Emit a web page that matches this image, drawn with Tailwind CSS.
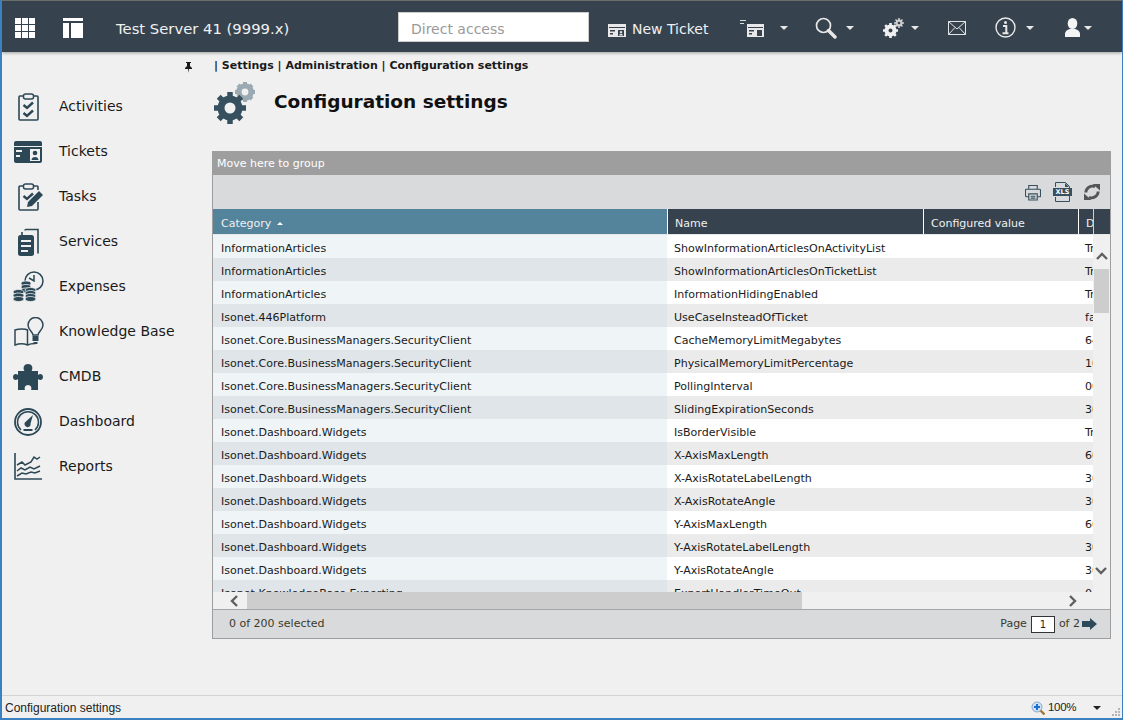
<!DOCTYPE html>
<html lang="en">
<head>
    <meta charset="UTF-8">
    <meta name="viewport" content="width=device-width, initial-scale=1.0">
    <title>Configuration settings</title>
    <script src="https://cdn.jsdelivr.net/npm/@tailwindcss/browser@4"></script>
</head>
<body class="bg-[#f0f0f0] font-['DejaVu_Sans',sans-serif] overflow-hidden">
<div class="w-[1123px] h-[720px] flex flex-col border-l-2 border-r border-b-2 border-t border-l-[#3b80c0] border-r-[#3b80c0] border-b-[#3b80c0] border-t-[#6d6d6d] overflow-hidden">

    <!-- Top bar -->
    <header class="h-[51px] shrink-0 pt-[2px] bg-[#36434f] flex items-center text-white shadow-[0_1px_3px_rgba(0,0,0,0.35)] relative z-10">
        <svg class="ml-[13px] w-[20px] h-[20px]" viewBox="0 0 20 20" fill="#fff"><path d="M0 0h6v6H0zM7 0h6v6H7zM14 0h6v6h-6zM0 7h6v6H0zM7 7h6v6H7zM14 7h6v6h-6zM0 14h6v6H0zM7 14h6v6H7zM14 14h6v6h-6z"/></svg>
        <svg class="ml-[28px] w-[20px] h-[20px]" viewBox="0 0 20 20" fill="#fff"><path d="M0 0h20v3H0zM0 5h6v15H0zM8 5h12v15H8z"/></svg>
        <span class="ml-[33px] w-[282px] pt-[4px] text-[14.8px] text-[#f0f0f0]">Test Server 41 (9999.x)</span>
        <div class="w-[191px] h-[30px] mb-[2px] bg-white border border-[#ccc] flex items-center pl-[12px] pt-[6px] text-[14px] text-[#9a9a9a]">Direct access</div>
        <svg class="ml-[19px] w-[18px] h-[13px] mt-[6px]" viewBox="0 0 18 13"><path fill="#e8e8e8" d="M0 0h18v13H0z"/><path fill="#36434f" d="M1 3h16v1H1zM2 6h5v1.500H2zM2 9h3v1.500H2zM10 6h6v6h-6z"/><path fill="#e8e8e8" d="M13 7a1.200 1.200 0 1 1-.01 0zM11 11.500c0-2 4-2 4 0z"/></svg>
        <span class="ml-[6px] w-[108px] pt-[4px] text-[14px] text-[#f0f0f0]">New Ticket</span>
        <svg class="w-[24px] h-[18px]" viewBox="0 0 24 18"><path fill="none" stroke="#ddd" d="M0 1.500h6M0 4.500h4"/><path fill="#e8e8e8" d="M7 5h17v13H7z"/><path fill="#36434f" d="M8 8h15v1H8zM9 11h5v1.500H9zM9 14h3v1.500H9zM17 11h5v6h-5z"/></svg>
        <svg class="ml-[16px] w-[8px] h-[4px]" viewBox="0 0 8 4" fill="#e8e8e8"><path d="M0 0h8L4 4z"/></svg>
        <svg class="ml-[27px] w-[22px] h-[22px]" viewBox="0 0 22 22" fill="none" stroke="#e8e8e8"><circle cx="8.500" cy="8.500" r="7" stroke-width="1.700"/><path d="M13.500 13.500l6.500 6.500" stroke-width="3.400" stroke-linecap="round"/></svg>
        <svg class="ml-[9px] w-[8px] h-[4px]" viewBox="0 0 8 4" fill="#e8e8e8"><path d="M0 0h8L4 4z"/></svg>
        <svg class="ml-[29px] w-[21px] h-[20px]" viewBox="0 0 21 20">
            <circle cx="7.500" cy="12.500" r="4.500" fill="none" stroke="#f0f0f0" stroke-width="3"/>
            <path stroke="#f0f0f0" stroke-width="2.600" d="M7.500 5v15M0 12.500h15M2.200 7.200l10.600 10.600M12.800 7.200L2.200 17.800"/>
            <circle cx="7.500" cy="12.500" r="2" fill="#36434f"/>
            <circle cx="16" cy="5" r="2.600" fill="none" stroke="#cfcfcf" stroke-width="1.800"/>
            <path stroke="#cfcfcf" stroke-width="1.500" d="M16 0v10M11 5h10M12.500 1.500l7 7M19.500 1.500l-7 7"/>
            <circle cx="16" cy="5" r="1.300" fill="#36434f"/>
        </svg>
        <svg class="ml-[7px] w-[8px] h-[4px]" viewBox="0 0 8 4" fill="#e8e8e8"><path d="M0 0h8L4 4z"/></svg>
        <svg class="ml-[29px] w-[18px] h-[14px]" viewBox="0 0 18 14" fill="none" stroke="#e4e4e4"><path d="M.5.500h17v13H.5zM.5.500L9 8l8.500-7.500M.5 13.500L7 6.500M17.500 13.500L11 6.500"/></svg>
        <svg class="ml-[29px] w-[21px] h-[21px]" viewBox="0 0 21 21" fill="none" stroke="#e8e8e8"><circle cx="10.500" cy="10.500" r="9.500" stroke-width="1.400"/><circle cx="10.500" cy="5.500" r="1.500" fill="#e8e8e8" stroke="none"/><path stroke-width="2" d="M8 9h3.300v7M7.500 16.200h6"/></svg>
        <svg class="ml-[10px] w-[8px] h-[4px]" viewBox="0 0 8 4" fill="#e8e8e8"><path d="M0 0h8L4 4z"/></svg>
        <svg class="ml-[31px] w-[15px] h-[19px]" viewBox="0 0 15 19" fill="#f5f5f5"><ellipse cx="7.500" cy="5.500" rx="4.800" ry="5.500"/><path d="M0 19v-3c0-3 3-4.500 5-5h5c2 .5 5 2 5 5v3z"/></svg>
        <svg class="ml-[4px] w-[8px] h-[4px]" viewBox="0 0 8 4" fill="#e8e8e8"><path d="M0 0h8L4 4z"/></svg>
    </header>

    <div class="flex flex-1 min-h-0">
        <!-- Sidebar -->
        <aside class="w-[210px] shrink-0 relative">
            <svg class="absolute left-[182px] top-[10px] w-[9px] h-[11px]" viewBox="0 0 9 11" fill="#1c1c1c"><path d="M2 0h5v1H6v3l2 2v1H5l-.500 4L4 7H1V6l2-2V1H2z"/></svg>
            <nav id="sideNav" class="pt-[32px] flex flex-col"></nav>
        </aside>

        <!-- Content -->
        <main class="flex-1 min-w-0 pr-[11px]">
            <p class="h-[25px] pt-[6px] text-[11px] font-bold text-[#1a1a1a] pl-[2px] whitespace-pre">| Settings | Administration | Configuration settings</p>
            <div class="h-[74px] flex items-start pl-[2px]">
                <svg class="mt-[4px] w-[43px] h-[44px]" viewBox="0 0 43 44">
                    <circle cx="31" cy="11" r="6.800" fill="none" stroke="#9aa9b2" stroke-width="4"/>
                    <path stroke="#9aa9b2" stroke-width="4" d="M31 1v20M21 11h20M24 4l14 14M38 4L24 18"/>
                    <circle cx="31" cy="11" r="3.400" fill="#f0f0f0"/>
                    <circle cx="16" cy="27" r="9.500" fill="none" stroke="#36505f" stroke-width="6"/>
                    <path stroke="#36505f" stroke-width="5.500" d="M16 11v32M0 27h32M4.700 15.700l22.600 22.600M27.300 15.700L4.700 38.300"/>
                    <circle cx="16" cy="27" r="5.500" fill="#f0f0f0"/>
                </svg>
                <h1 class="ml-[17px] mt-[7px] text-[18.5px] leading-[36px] font-bold text-[#111]">Configuration settings</h1>
            </div>

            <!-- Grid panel -->
            <section class="w-[899px] h-[488px] border-x border-b border-[#9e9e9e] flex flex-col">
                <div class="h-[24px] shrink-0 -mx-px bg-[#9e9e9e] text-white text-[11px] leading-[25px] pl-[5px]">Move here to group</div>
                <div class="h-[34px] shrink-0 bg-[#d9dadc] flex items-center justify-end pr-[10px] gap-[12px]">
                    <svg class="w-[16px] h-[17px]" viewBox="0 0 17 17" fill="none" stroke="#36505f" stroke-width="1.200"><path d="M4 5V1h9v4M3.500 13H1.500a1 1 0 0 1-1-1V6a1 1 0 0 1 1-1h14a1 1 0 0 1 1 1v6a1 1 0 0 1-1 1h-2M4 10h9v6.500H4zM6 12.500h5M6 14.500h5"/></svg>
                    <svg class="w-[19px] h-[20px]" viewBox="0 0 19 20"><path fill="none" stroke="#36505f" d="M2.500 5V.5h10l4 4V19.500h-14V15"/><path fill="#36505f" d="M12 1v4h4zM0 6h19v8H0z"/><text x="9.500" y="12.300" text-anchor="middle" font-size="6.500" font-weight="700" fill="#fff" font-family="DejaVu Sans">XLS</text></svg>
                    <svg class="w-[16px] h-[16px]" viewBox="0 0 16 16" fill="none" stroke="#555" stroke-width="2.800"><path d="M1.800 8.500A6.500 6.500 0 0 1 11 2.800M14.200 7.500A6.500 6.500 0 0 1 5 13.200"/><path fill="#555" stroke="none" d="M8.500 0L16 0v6.500zM7.500 16L0 16V9.500z"/></svg>
                </div>
                <div class="h-[25px] shrink-0 flex text-[11px] text-[#f0f0f0] leading-[30px] bg-[#36434f]">
                    <div class="w-[455px] bg-[#54849c] pl-[8px] border-r border-[#fff]">Category <span class="inline-block align-middle ml-[2px] mb-[1px] w-0 h-0 border-x-[3px] border-x-transparent border-b-[3px] border-b-white"></span></div>
                    <div class="w-[256px] pl-[7px] border-r border-[#fff]">Name</div>
                    <div class="w-[155px] pl-[7px] border-r border-[#fff]">Configured value</div>
                    <div class="w-[15px] pl-[7px] overflow-hidden border-r border-[#d0d0d0]">Default</div>
                </div>
                <div class="h-px shrink-0 bg-[#e8e8e8]"></div>
                <div class="h-[357px] shrink-0 flex">
                    <div id="rows" class="w-[880px] overflow-hidden text-[11.05px] text-[#1a1a1a]"></div>
                    <div class="w-[17px] bg-[#f0f0f0] flex flex-col items-center pt-[17px] relative">
                        <svg class="w-[12px] h-[8px]" viewBox="0 0 12 8" fill="none" stroke="#606060" stroke-width="2.400"><path d="M1 7l5-5 5 5"/></svg>
                        <div class="mt-[9px] w-[15px] h-[44px] bg-[#cdcdcd]"></div>
                        <svg class="absolute left-[2px] top-[332px] w-[12px] h-[8px]" viewBox="0 0 12 8" fill="none" stroke="#606060" stroke-width="2.400"><path d="M1 1l5 5 5-5"/></svg>
                    </div>
                </div>
                <div class="h-[17px] shrink-0 bg-[#f0f0f0] flex items-center pl-[17px] pr-[33px] border-b border-[#a5a5a5] box-content">
                    <svg class="w-[8px] h-[12px]" viewBox="0 0 8 12" fill="none" stroke="#606060" stroke-width="2.400"><path d="M7 1L2 6l5 5"/></svg>
                    <div class="ml-[9px] w-[555px] h-[17px] bg-[#cdcdcd]"></div>
                    <svg class="ml-auto w-[8px] h-[12px]" viewBox="0 0 8 12" fill="none" stroke="#606060" stroke-width="2.400"><path d="M1 1l5 5-5 5"/></svg>
                </div>
                <div class="flex-1 bg-[#d9dadc] flex items-center justify-between pl-[16px] pr-[13px] text-[11px] text-[#3a3a2a]">
                    <span>0 of 200 selected</span>
                    <div class="flex items-center">
                        <span>Page</span>
                        <span class="ml-[4px] w-[24px] h-[17px] bg-white border border-[#333] text-[10px] text-[#222] text-center leading-[16px]">1</span>
                        <span class="ml-[4px]">of 2</span>
                        <svg class="ml-[2px] w-[15px] h-[12px]" viewBox="0 0 15 12" fill="#2e4a58"><path d="M0 3h8V0l7 6-7 6V9H0z"/></svg>
                    </div>
                </div>
            </section>
        </main>
    </div>

    <!-- Status bar -->
    <footer class="h-[23px] shrink-0 bg-[#f0f0f0] border-t border-[#d4d4d4] flex items-center pt-[2px] text-[#222] pl-[3px] relative">
        <span class="font-['Liberation_Sans',sans-serif] text-[12px]">Configuration settings</span>
        <svg class="ml-auto w-[14px] h-[14px]" viewBox="0 0 14 14"><circle cx="6" cy="6" r="5" fill="#cfe2f5" stroke="#8aa8c8"/><path stroke="#1c6ecf" stroke-width="2" d="M6 3v6M3 6h6"/><path stroke="#a5783a" stroke-width="2.400" d="M9.500 9.500l4 4"/></svg>
        <span class="ml-[3px] mr-[18px] w-[27px] font-['Liberation_Sans',sans-serif] text-[11.500px] tracking-[-0.3px] text-[#222]">100%</span>
        <svg class="mr-[21px] w-[8px] h-[4px]" viewBox="0 0 8 4" fill="#222"><path d="M0 0h8L4 4z"/></svg>
        <svg class="absolute right-[1px] bottom-[1px] w-[9px] h-[9px]" viewBox="0 0 9 9" fill="#b4b4b4"><path d="M6 0h2v2H6zM3 3h2v2H3zM6 3h2v2H6zM0 6h2v2H0zM3 6h2v2H3zM6 6h2v2H6z"/></svg>
    </footer>
</div>

<script>
    // Sidebar entries, icons are inline svg
    const navIcons = {
        activities: `<svg class="w-[21px] h-[29px]" viewBox="0 0 21 29" fill="none" stroke="#2c4856"><path stroke-width="1.600" d="M6 4H2a1 1 0 0 0-1 1v22a1 1 0 0 0 1 1h17a1 1 0 0 0 1-1V5a1 1 0 0 0-1-1h-4"/><rect x="5.500" y="2" width="10" height="5" rx="2" stroke-width="1.500"/><path stroke-width="2.400" d="M5.500 13l3.500 3 6-5.500M5.500 21l3.500 3 6-5.500"/></svg>`,
        tickets: `<svg class="w-[28px] h-[22px]" viewBox="0 0 28 22"><rect width="28" height="22" rx="2" fill="#2c4856"/><path fill="#f0f0f0" d="M0 5h28v1H0zM2 9h6v2H2zM2 14h4v2H2zM16 8h10v12H16z"/><circle cx="21" cy="12" r="2.300" fill="#2c4856"/><path fill="#2c4856" d="M17.500 19c0-4 7-4 7 0z"/></svg>`,
        tasks: `<svg class="w-[25px] h-[29px]" viewBox="0 0 25 29" fill="none" stroke="#2c4856"><path stroke-width="1.600" d="M6 4H2a1 1 0 0 0-1 1v22a1 1 0 0 0 1 1h17a1 1 0 0 0 1-1v-7M20 8V5a1 1 0 0 0-1-1h-4"/><rect x="5.500" y="2" width="10" height="5" rx="2" stroke-width="1.500"/><path stroke-width="2.400" d="M5.500 14l3.500 3 6-5.500"/><path fill="#2c4856" stroke="none" d="M21 9l4 4-11 11-5 1 1-5z"/></svg>`,
        services: `<svg class="w-[21px] h-[28px]" viewBox="0 0 21 28"><path fill="none" stroke="#2c4856" stroke-width="1.600" d="M7 2.500a1 1 0 0 1 1-1h12v24M4 7V4"/><rect x="0" y="7" width="16" height="21" rx="2.500" fill="#2c4856"/><path fill="#f0f0f0" d="M3 12h10v2H3zM3 17h10v2H3zM3 22h7v2H3z"/></svg>`,
        expenses: `<svg class="w-[31px] h-[31px]" viewBox="0 0 31 31"><circle cx="21" cy="10" r="9" fill="#f0f0f0" stroke="#2c4856" stroke-width="1.500"/><path fill="none" stroke="#2c4856" stroke-width="1.500" d="M21 4v6l-5-3"/><g fill="#2c4856" stroke="#f0f0f0" stroke-width=".8"><ellipse cx="13" cy="12.500" rx="5" ry="2.500"/><ellipse cx="13" cy="16" rx="5" ry="2.500"/><ellipse cx="13" cy="19.500" rx="5" ry="2.500"/><ellipse cx="5.500" cy="21" rx="5.500" ry="2.500"/><ellipse cx="5.500" cy="24.500" rx="5.500" ry="2.500"/><ellipse cx="5.500" cy="28" rx="5.500" ry="2.500"/><ellipse cx="17.500" cy="19" rx="5.500" ry="2.500"/><ellipse cx="17.500" cy="22" rx="5.500" ry="2.500"/><ellipse cx="17.500" cy="25" rx="5.500" ry="2.500"/><ellipse cx="17.500" cy="28" rx="5.500" ry="2.500"/></g></svg>`,
        knowledge: `<svg class="w-[30px] h-[30px]" viewBox="0 0 30 30" fill="none" stroke="#2c4856" stroke-width="1.500"><path d="M14 13C11 11.500 5 11.500 1 13v15c4-1.500 9-1.500 12.500 0 2-1 5-1.500 8-1.500"/><path d="M13.500 13v15"/><path d="M19 18c0-3-5-5-5-10a7.500 7.500 0 0 1 15 0c0 5-5 7-5 10z" fill="#f0f0f0"/><path fill="#2c4856" stroke="none" d="M18.500 19h6v5h-6zM19.500 25h4v2h-4z"/></svg>`,
        cmdb: `<svg class="w-[30px] h-[26px]" viewBox="0 0 30 26" fill="#2c4856"><path d="M5 7h6.500C10 5 10 0 15 0s5 5 3.500 7H25v4c2-2 5-1 5 2s-3 4-5 2v11h-7c1-2 0-5-3-5s-4 3-3 5H5V15c-2 2-5 1-5-2s3-4 5-2z"/></svg>`,
        dashboard: `<svg class="w-[28px] h-[28px]" viewBox="0 0 28 28" fill="none" stroke="#2c4856"><circle cx="14" cy="14" r="13" stroke-width="1.800"/><path stroke-width="1.500" d="M7 22A10.500 10.500 0 1 1 21 22"/><path stroke-width="2" d="M9.500 22h9"/><path fill="#2c4856" stroke="none" d="M19 7l-2.500 8.500a3 3 0 1 1-4.500-2z"/></svg>`,
        reports: `<svg class="w-[28px] h-[27px]" viewBox="0 0 28 27" fill="none" stroke="#2c4856"><path stroke-width="1.600" d="M1 0v26h27"/><path stroke-width="1.500" d="M3 12l5-3 3 3 6-3 3-5 3 2 3-2M3 18l4-3 4 2 5-3 4 2 6-3M3 23l5-3 4 1 5-2 4 1 5-2"/></svg>`
    };

    const navItems = [
        { key: 'activities', label: 'Activities', box: 'pl-[16px]' },
        { key: 'tickets', label: 'Tickets', box: 'pl-[12px]' },
        { key: 'tasks', label: 'Tasks', box: 'pl-[16px]' },
        { key: 'services', label: 'Services', box: 'pl-[16px]' },
        { key: 'expenses', label: 'Expenses', box: 'pl-[11px]' },
        { key: 'knowledge', label: 'Knowledge Base', box: 'pl-[12px]' },
        { key: 'cmdb', label: 'CMDB', box: 'pl-[11px]' },
        { key: 'dashboard', label: 'Dashboard', box: 'pl-[12px]' },
        { key: 'reports', label: 'Reports', box: 'pl-[12px]' }
    ];

    const sideNav = document.getElementById('sideNav');
    navItems.forEach(item => {
        const row = document.createElement('a');
        row.className = 'h-[45px] flex items-center text-[14px] text-[#1a1a1a]';
        row.innerHTML = `<span class="w-[57px] shrink-0 flex ${item.box}">${navIcons[item.key]}</span><span>${item.label}</span>`;
        sideNav.appendChild(row);
    });

    // Configuration rows
    const rows = [
        ['InformationArticles', 'ShowInformationArticlesOnActivityList', 'True'],
        ['InformationArticles', 'ShowInformationArticlesOnTicketList', 'True'],
        ['InformationArticles', 'InformationHidingEnabled', 'True'],
        ['Isonet.446Platform', 'UseCaseInsteadOfTicket', 'false'],
        ['Isonet.Core.BusinessManagers.SecurityClient', 'CacheMemoryLimitMegabytes', '64'],
        ['Isonet.Core.BusinessManagers.SecurityClient', 'PhysicalMemoryLimitPercentage', '10'],
        ['Isonet.Core.BusinessManagers.SecurityClient', 'PollingInterval', '00'],
        ['Isonet.Core.BusinessManagers.SecurityClient', 'SlidingExpirationSeconds', '30'],
        ['Isonet.Dashboard.Widgets', 'IsBorderVisible', 'True'],
        ['Isonet.Dashboard.Widgets', 'X-AxisMaxLength', '60'],
        ['Isonet.Dashboard.Widgets', 'X-AxisRotateLabelLength', '30'],
        ['Isonet.Dashboard.Widgets', 'X-AxisRotateAngle', '30'],
        ['Isonet.Dashboard.Widgets', 'Y-AxisMaxLength', '60'],
        ['Isonet.Dashboard.Widgets', 'Y-AxisRotateLabelLength', '30'],
        ['Isonet.Dashboard.Widgets', 'Y-AxisRotateAngle', '30'],
        ['Isonet.KnowledgeBase.Exporting', 'ExportHandlerTimeOut', '0']
    ];

    const rowsBody = document.getElementById('rows');
    rows.forEach((r, i) => {
        const odd = i % 2 === 1;
        const row = document.createElement('div');
        row.className = odd ? 'flex h-[23px] leading-[27px] bg-[#ebebeb]' : 'flex h-[23px] leading-[27px] bg-white';
        row.innerHTML = `
            <div class="w-[454px] pl-[8px] ${odd ? 'bg-[#dfe5e8]' : 'bg-[#eff4f7]'}">${r[0]}</div>
            <div class="w-[256px] pl-[7px]">${r[1]}</div>
            <div class="w-[155px]"></div>
            <div class="w-[15px] pl-[7px] overflow-hidden">${r[2]}</div>
        `;
        rowsBody.appendChild(row);
    });
</script>
</body>
</html>
